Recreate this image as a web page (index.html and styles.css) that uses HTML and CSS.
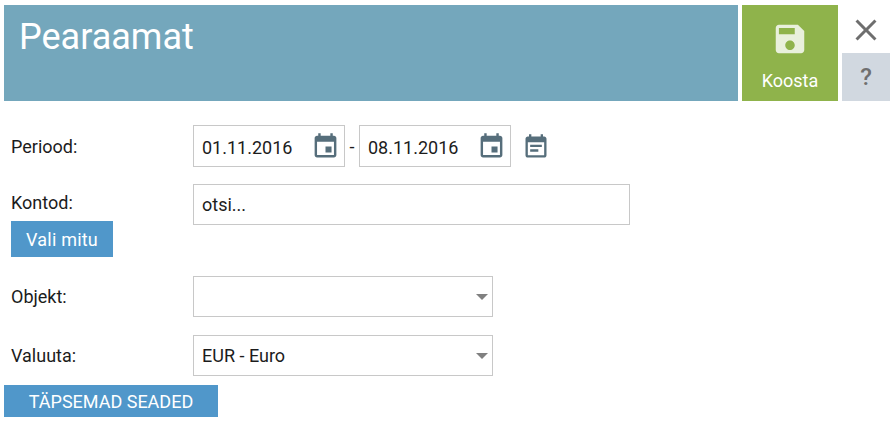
FILE: index.html
```html
<!DOCTYPE html>
<html lang="et">
  <head>
    <meta charset="UTF-8" />
    <meta name="viewport" content="width=device-width, initial-scale=1.0" />
    <title>Pearaamat</title>
    <link rel="stylesheet" href="styles.css">
  </head>
  <body>
    <!-- pealkiri ja nupud -->
    <div class="top">
      <h1 class="title">Pearaamat</h1>
      <button class="save" type="button">
        <svg class="save-icon" viewBox="0 0 24 24"><path d="M17 3H5c-1.11 0-2 .9-2 2v14c0 1.1.89 2 2 2h14c1.1 0 2-.9 2-2V7l-4-4zm-5 16c-1.66 0-3-1.34-3-3s1.34-3 3-3 3 1.34 3 3-1.34 3-3 3zm3-10H5V5h10v4z"/></svg>
        <span>Koosta</span>
      </button>
      <div class="side">
        <button class="close" type="button">
          <svg class="close-icon" viewBox="0 0 24 24"><path d="M19 6.41L17.59 5 12 10.59 6.41 5 5 6.41 10.59 12 5 17.59 6.41 19 12 13.41 17.59 19 19 17.59 13.41 12z"/></svg>
        </button>
        <button class="help" type="button">?</button>
      </div>
    </div>

    <!-- vorm -->
    <form class="form">
      <div class="row row-period">
        <label class="label">Periood:</label>
        <div class="date">
          <input class="date-input" type="text" value="01.11.2016" />
          <svg class="cal-icon" viewBox="0 0 24 24"><path d="M17 12h-5v5h5v-5zM16 1v2H8V1H6v2H5c-1.11 0-1.99.9-1.99 2L3 19c0 1.1.89 2 2 2h14c1.1 0 2-.9 2-2V5c0-1.1-.9-2-2-2h-1V1h-2zm3 18H5V8h14v11z"/></svg>
        </div>
        <span class="dash">-</span>
        <div class="date">
          <input class="date-input" type="text" value="08.11.2016" />
          <svg class="cal-icon" viewBox="0 0 24 24"><path d="M17 12h-5v5h5v-5zM16 1v2H8V1H6v2H5c-1.11 0-1.99.9-1.99 2L3 19c0 1.1.89 2 2 2h14c1.1 0 2-.9 2-2V5c0-1.1-.9-2-2-2h-1V1h-2zm3 18H5V8h14v11z"/></svg>
        </div>
        <svg class="note-icon" viewBox="0 0 24 24"><path d="M17 10H7v2h10v-2zm2-7h-1V1h-2v2H8V1H6v2H5c-1.11 0-1.99.9-1.99 2L3 19c0 1.1.89 2 2 2h14c1.1 0 2-.9 2-2V5c0-1.1-.9-2-2-2zm0 16H5V8h14v11zm-5-5H7v2h7v-2z"/></svg>
      </div>

      <div class="row row-account">
        <div class="account-left">
          <label class="label account-label">Kontod:</label>
          <button class="btn btn-multi" type="button">Vali mitu</button>
        </div>
        <input class="search" type="text" value="otsi..." />
      </div>

      <div class="row row-object">
        <label class="label">Objekt:</label>
        <div class="select"></div>
      </div>

      <div class="row row-currency">
        <label class="label">Valuuta:</label>
        <div class="select">EUR - Euro</div>
      </div>

      <button class="btn btn-more" type="button">TÄPSEMAD SEADED</button>
    </form>
  </body>
</html>
```

FILE: styles.css
```css
* {
  margin: 0;
  padding: 0;
  box-sizing: border-box;
}

body {
  padding: 5px 4px 0;
  font-family: Roboto, "Liberation Sans", sans-serif;
  font-size: 18px;
  color: #1c1c1c;
  background-color: #fff;
}

button {
  border: 0;
  font-family: inherit;
  cursor: pointer;
}

/* ülemine riba */
.top {
  display: flex;
  gap: 4px;
  height: 96px;
}

.title {
  flex: 1;
  padding: 10px 15px;
  font-size: 36px;
  line-height: 44px;
  font-weight: 400;
  color: #fff;
  background-color: #74a7bc;
}

.save {
  width: 96px;
  display: flex;
  flex-direction: column;
  align-items: center;
  padding-top: 15px;
  font-size: 18px;
  color: #fff;
  background-color: #8fb34b;
}
.save-icon {
  width: 38px;
  height: 38px;
  fill: #e9f0dc;
}
.save span {
  margin-top: 13px;
  line-height: 20px;
}

.side {
  width: 48px;
  display: flex;
  flex-direction: column;
}
.close {
  height: 48px;
  display: flex;
  align-items: center;
  justify-content: center;
  padding-top: 2px;
  background-color: #fff;
}
.close-icon {
  width: 36px;
  height: 36px;
  fill: #6e6e6e;
}
.help {
  height: 48px;
  font-size: 24px;
  font-weight: 500;
  color: #6f6f6f;
  background-color: #d1d8e0;
}

/* vorm */
.row {
  display: flex;
  padding-left: 7px;
}
.label {
  width: 182px;
  flex: none;
  line-height: 41px;
}

.row-period {
  height: 42px;
  margin-top: 24px;
  align-items: center;
}
.date {
  width: 152px;
  height: 42px;
  display: flex;
  align-items: center;
  border: 1px solid #c8c8c8;
}
.date-input {
  width: 117px;
  height: 40px;
  padding: 2px 0 0 8px;
  border: 0;
  outline: 0;
  font: inherit;
  color: #1c1c1c;
}
.cal-icon {
  width: 29px;
  height: 29px;
  flex: none;
  margin-top: 1px;
  fill: #566e7b;
}
.dash {
  width: 14px;
  text-align: center;
}
.note-icon {
  width: 28px;
  height: 28px;
  margin: 1px 0 0 11px;
  fill: #566e7b;
}

.row-account {
  margin-top: 17px;
}
.account-label {
  display: block;
  height: 37px;
  line-height: 38px;
}
.search {
  width: 437px;
  height: 41px;
  padding-left: 8px;
  border: 1px solid #c8c8c8;
  outline: 0;
  font: inherit;
  color: #1c1c1c;
}

.btn {
  display: block;
  font-size: 18px;
  color: #fff;
  background-color: #5097ca;
}
.btn-multi {
  width: 102px;
  height: 36px;
  letter-spacing: 0.2px;
}
.btn-more {
  width: 214px;
  height: 32px;
  margin-top: 9px;
}

.row-object {
  margin-top: 19px;
}
.row-currency {
  margin-top: 18px;
}
.select {
  position: relative;
  width: 300px;
  height: 41px;
  padding-left: 8px;
  border: 1px solid #c8c8c8;
  line-height: 40px;
}
.select::after {
  content: "";
  position: absolute;
  top: 17px;
  right: 4px;
  border-left: 6px solid transparent;
  border-right: 6px solid transparent;
  border-top: 6px solid #808080;
}
```
